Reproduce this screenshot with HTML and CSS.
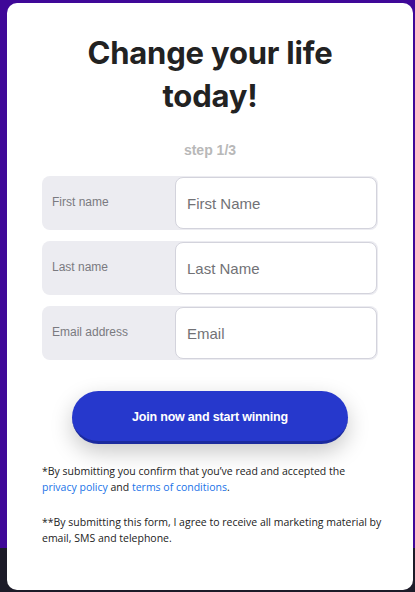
FILE: index.html
```html
<!DOCTYPE html>
<html lang="en">
<head>
    <meta charset="UTF-8">
    <meta name="viewport" content="width=device-width, initial-scale=1.0">
    <title>Change your life today</title>
    <link rel="stylesheet" href="styles.css">
</head>
<body>
<div class="modal">
    <h1>Change your life today!</h1>
    <p class="step">step 1/3</p>
    <form class="signup">
        <div class="field">
            <label for="firstName">First name</label>
            <input type="text" id="firstName" placeholder="First Name">
        </div>
        <div class="field">
            <label for="lastName">Last name</label>
            <input type="text" id="lastName" placeholder="Last Name">
        </div>
        <div class="field">
            <label for="email">Email address</label>
            <input type="text" id="email" placeholder="Email">
        </div>
        <button type="button">Join now and start winning</button>
    </form>
    <p class="note">*By submitting you confirm that you’ve read and accepted the <a href="#">privacy policy</a> and <a href="#">terms of conditions</a>.</p>
    <p class="note wide">**By submitting this form, I agree to receive all marketing material by email, SMS and telephone.</p>
</div>
</body>
</html>
```

FILE: styles.css
```css
body {
    margin: 0;
    padding: 3px 2px 0 7px;
    height: 592px;
    box-sizing: border-box;
    overflow: hidden;
    background: linear-gradient(to bottom, #3f0898 0, #3f0898 548px, #1c1b28 548px);
}

.modal {
    box-sizing: border-box;
    height: 587px;
    padding: 28px 35px 0 35px;
    background-color: #ffffff;
    border-radius: 10px;
}

h1 {
    margin: 0 34px;
    font-family: Inter, "Liberation Sans", sans-serif;
    font-size: 31px;
    font-weight: 700;
    line-height: 43px;
    text-align: center;
    color: #222222;
    letter-spacing: -0.2px;
}

.step {
    margin: 25px 0 18px;
    font-family: "Liberation Sans", Arial, sans-serif;
    font-size: 14px;
    line-height: 16px;
    font-weight: bold;
    text-align: center;
    color: #b8b8b8;
}

.signup {
    display: flex;
    flex-direction: column;
    gap: 11px;
}

.field {
    display: flex;
    align-items: center;
    height: 54px;
    padding: 1px 1px 1px 10px;
    box-sizing: border-box;
    background-color: #ececf1;
    border-radius: 8px;
}

.field label {
    flex: 0 0 123px;
    margin-top: -2px;
    font-family: "Liberation Sans", Arial, sans-serif;
    font-size: 12px;
    color: #7a7a80;
}

.field input {
    flex: 1;
    min-width: 0;
    height: 52px;
    box-sizing: border-box;
    padding: 0 11px;
    border: 1px solid #d3d3dc;
    border-radius: 8px;
    background-color: #ffffff;
    font-family: "Liberation Sans", Arial, sans-serif;
    font-size: 15px;
    outline: none;
}

.field input::placeholder {
    color: #727276;
}

button {
    align-self: center;
    width: 276px;
    height: 53px;
    margin-top: 20px;
    padding-top: 2px;
    border: none;
    border-bottom: 3px solid #1b2a9e;
    border-radius: 27px;
    background-color: #2638cc;
    color: #ffffff;
    font-family: "Liberation Sans", Arial, sans-serif;
    font-size: 12.5px;
    font-weight: bold;
    letter-spacing: -0.2px;
    cursor: pointer;
    box-shadow: 0 8px 22px rgba(0, 0, 0, 0.22);
}

.note {
    margin: 19px 0 0;
    font-family: "Open Sans", "Noto Sans", sans-serif;
    font-size: 10.5px;
    line-height: 16px;
    color: #222222;
}

.note + .note {
    margin-top: 19px;
}

.note.wide {
    margin-right: -6px;
}

.note a {
    color: #1a73e8;
    text-decoration: none;
}
```
